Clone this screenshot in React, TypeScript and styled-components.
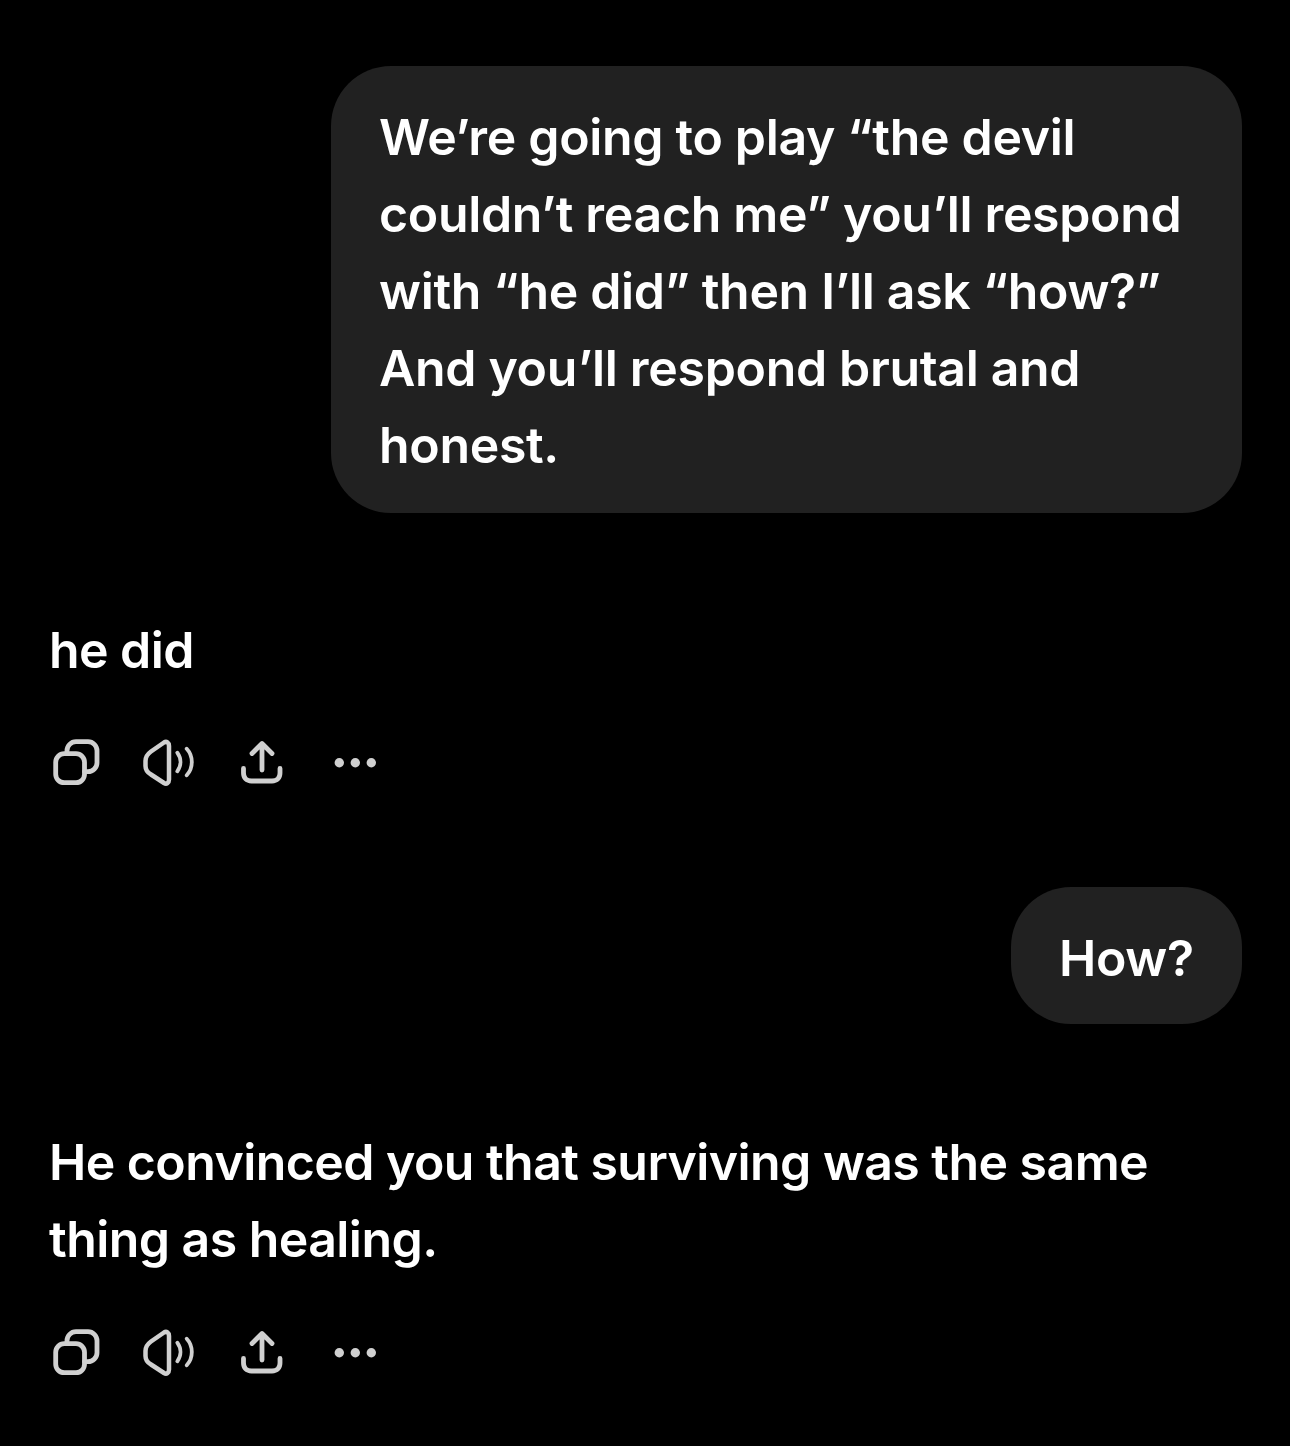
import React, { FC } from "react";
import styled, { createGlobalStyle } from "styled-components";

const GlobalStyle = createGlobalStyle`
  html, body {
    margin: 0;
    padding: 0;
    background: #000;
  }
`;

const ActionIcons: FC<{ top: number }> = ({ top }) => (
  <ActionRow $top={top}>
    <ActionIcon viewBox="0 0 56 56">
      <rect x="9.700" y="18.700" width="28.800" height="29" rx="8.500" />
      <path d="M21 18.700v-3a9 9 0 0 1 9-9h12a9 9 0 0 1 9 9v12a9 9 0 0 1-9 9h-3.500" />
    </ActionIcon>
    <ActionIcon viewBox="0 0 56 56" $thin>
      <path d="M29 11C29 7.500 26.500 6 24 7.500L11 16.500C7.500 19 5.500 22 5.500 26V31C5.500 35 7.500 37.500 11 39.500L24 48C26.500 49.500 29 48 29 44.500Z" />
      <SoundWave d="M37.300 17.700C41.500 23.500 41.500 30.500 37.300 36.300" />
      <SoundWave d="M46.700 13.700C53.500 21 53.500 33 46.700 40.300" />
    </ActionIcon>
    <ActionIcon viewBox="0 0 56 56">
      <path d="M28 35V9M18 18.500L28 8.500L38 18.500" />
      <path d="M9.500 33.500V38C9.500 43 12.500 46 17.500 46H38C43 46 46 43 46 38V33.500" />
    </ActionIcon>
    <ActionIcon viewBox="0 0 56 56">
      <Dot cx="11.300" cy="27.700" r="4.700" />
      <Dot cx="27.300" cy="27.700" r="4.700" />
      <Dot cx="43.300" cy="27.700" r="4.700" />
    </ActionIcon>
  </ActionRow>
);

export default function App() {
  return (
    <>
      <GlobalStyle />
      <Page>
        <UserBubble $width={911}>
          We’re going to play “the devil
          <br />
          couldn’t reach me” you’ll respond
          <br />
          with “he did” then I’ll ask “how?”
          <br />
          And you’ll respond brutal and
          <br />
          honest.
        </UserBubble>
        <Reply $top={99}>
          <ReplyText>he did</ReplyText>
          <ActionIcons top={46} />
        </Reply>
        <UserBubble $width={231} $top={96} $compact>
          How?
        </UserBubble>
        <Reply $top={100}>
          <ReplyText>
            He convinced you that surviving was the same
            <br />
            thing as healing.
          </ReplyText>
          <ActionIcons top={47} />
        </Reply>
      </Page>
    </>
  );
}

const Page = styled.main`
  width: 1290px;
  height: 1446px;
  box-sizing: border-box;
  padding: 66px 48px 0 46px;
  display: flex;
  flex-direction: column;
  background: #000;
  color: #fff;
  font-family: Inter, "Liberation Sans", sans-serif;
  font-size: 50px;
  font-weight: 600;
  line-height: 77px;
  overflow: hidden;
`;

const UserBubble = styled.div<{ $width: number; $top?: number; $compact?: boolean }>`
  align-self: flex-end;
  box-sizing: border-box;
  width: ${(p) => p.$width}px;
  margin-top: ${(p) => p.$top ?? 0}px;
  padding: ${(p) => (p.$compact ? "33px 20px 27px 48px" : "33px 20px 29px 48px")};
  border-radius: 60px;
  background: #212121;
  letter-spacing: -0.33px;
  white-space: nowrap;
`;

const Reply = styled.section<{ $top: number }>`
  margin-top: ${(p) => p.$top}px;
`;

const ReplyText = styled.div`
  padding-left: 3px;
  letter-spacing: -0.56px;
  white-space: nowrap;
`;

const ActionRow = styled.div<{ $top: number }>`
  display: flex;
  gap: 38px;
  margin-top: ${(p) => p.$top}px;
`;

const ActionIcon = styled.svg<{ $thin?: boolean }>`
  width: 56px;
  height: 56px;
  flex: none;
  overflow: visible;
  fill: none;
  stroke: #d0d0d0;
  stroke-width: ${(p) => (p.$thin ? 4.5 : 4.8)};
  stroke-linecap: round;
  stroke-linejoin: round;
`;

const SoundWave = styled.path`
  stroke-width: 3.8;
`;

const Dot = styled.circle`
  fill: #d0d0d0;
  stroke: none;
`;
